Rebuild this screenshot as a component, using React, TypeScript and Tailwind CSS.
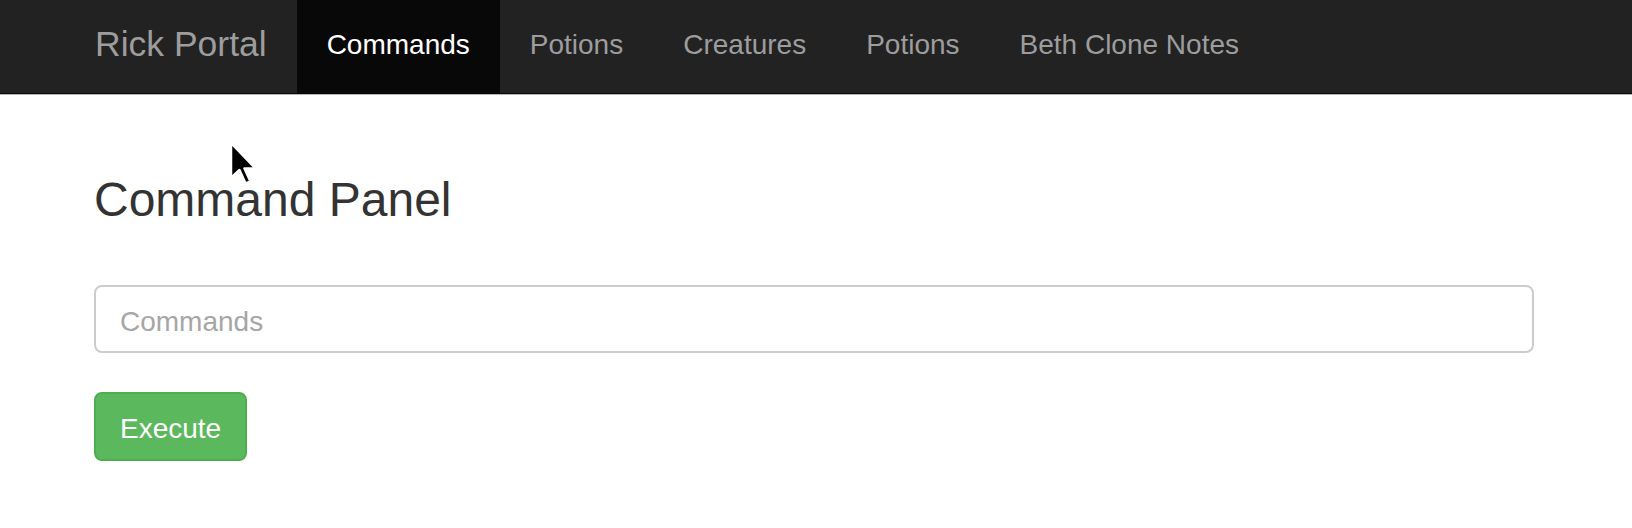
const links = [
  { label: "Commands", active: true },
  { label: "Potions", active: false },
  { label: "Creatures", active: false },
  { label: "Potions", active: false },
  { label: "Beth Clone Notes", active: false },
];

export default function App() {
  return (
    <div
      className="relative min-h-[528px] bg-white"
      style={{ fontFamily: '"Liberation Sans", Arial, sans-serif' }}
    >
      <nav className="h-[94px] border-b border-[#080808] bg-[#222222] shadow-[0_1px_0_#b5b5b5]">
        <div className="flex h-full pl-[65px]">
          <a className="flex items-center px-[30px] pb-[4px] text-[35.5px] text-[#9d9d9d]">
            Rick Portal
          </a>

          <ul className="flex h-full">
            {links.map((link, i) => (
              <li
                key={i}
                className={
                  link.active
                    ? "flex items-center bg-[#080808] px-[30px] pb-[4px] text-[28px] text-white"
                    : "flex items-center px-[30px] pb-[4px] text-[28px] text-[#9d9d9d]"
                }
              >
                {link.label}
              </li>
            ))}
          </ul>
        </div>
      </nav>

      <div className="w-[1440px] pl-[94px] box-content">
        <h3 className="mt-[80px] text-[48px] leading-[52px] text-[#333333]">
          Command Panel
        </h3>

        <input
          type="text"
          placeholder="Commands"
          className="mt-[59px] block h-[68px] w-[1440px] rounded-[8px] border-2 border-[#cccccc] px-[24px] pt-[5px] text-[28px] text-[#555555] outline-none placeholder:text-[#a6a6a6]"
        />

        <button className="mt-[39px] h-[69px] rounded-[8px] border-2 border-[#4cae4c] bg-[#5cb85c] px-[24px] pt-[4px] text-[28px] text-white">
          Execute
        </button>
      </div>

      <svg
        className="absolute left-[229px] top-[141px]"
        width="32"
        height="48"
        viewBox="-2 -2 32 48"
      >
        <polygon
          points="0,0 0,35 8.5,27 14.5,40.5 19.5,38.5 13.5,25.5 24.5,25.5"
          fill="#000"
          stroke="#fff"
          strokeWidth="2.5"
          strokeLinejoin="round"
          style={{ filter: "blur(0.6px)" }}
        />
      </svg>
    </div>
  );
}
